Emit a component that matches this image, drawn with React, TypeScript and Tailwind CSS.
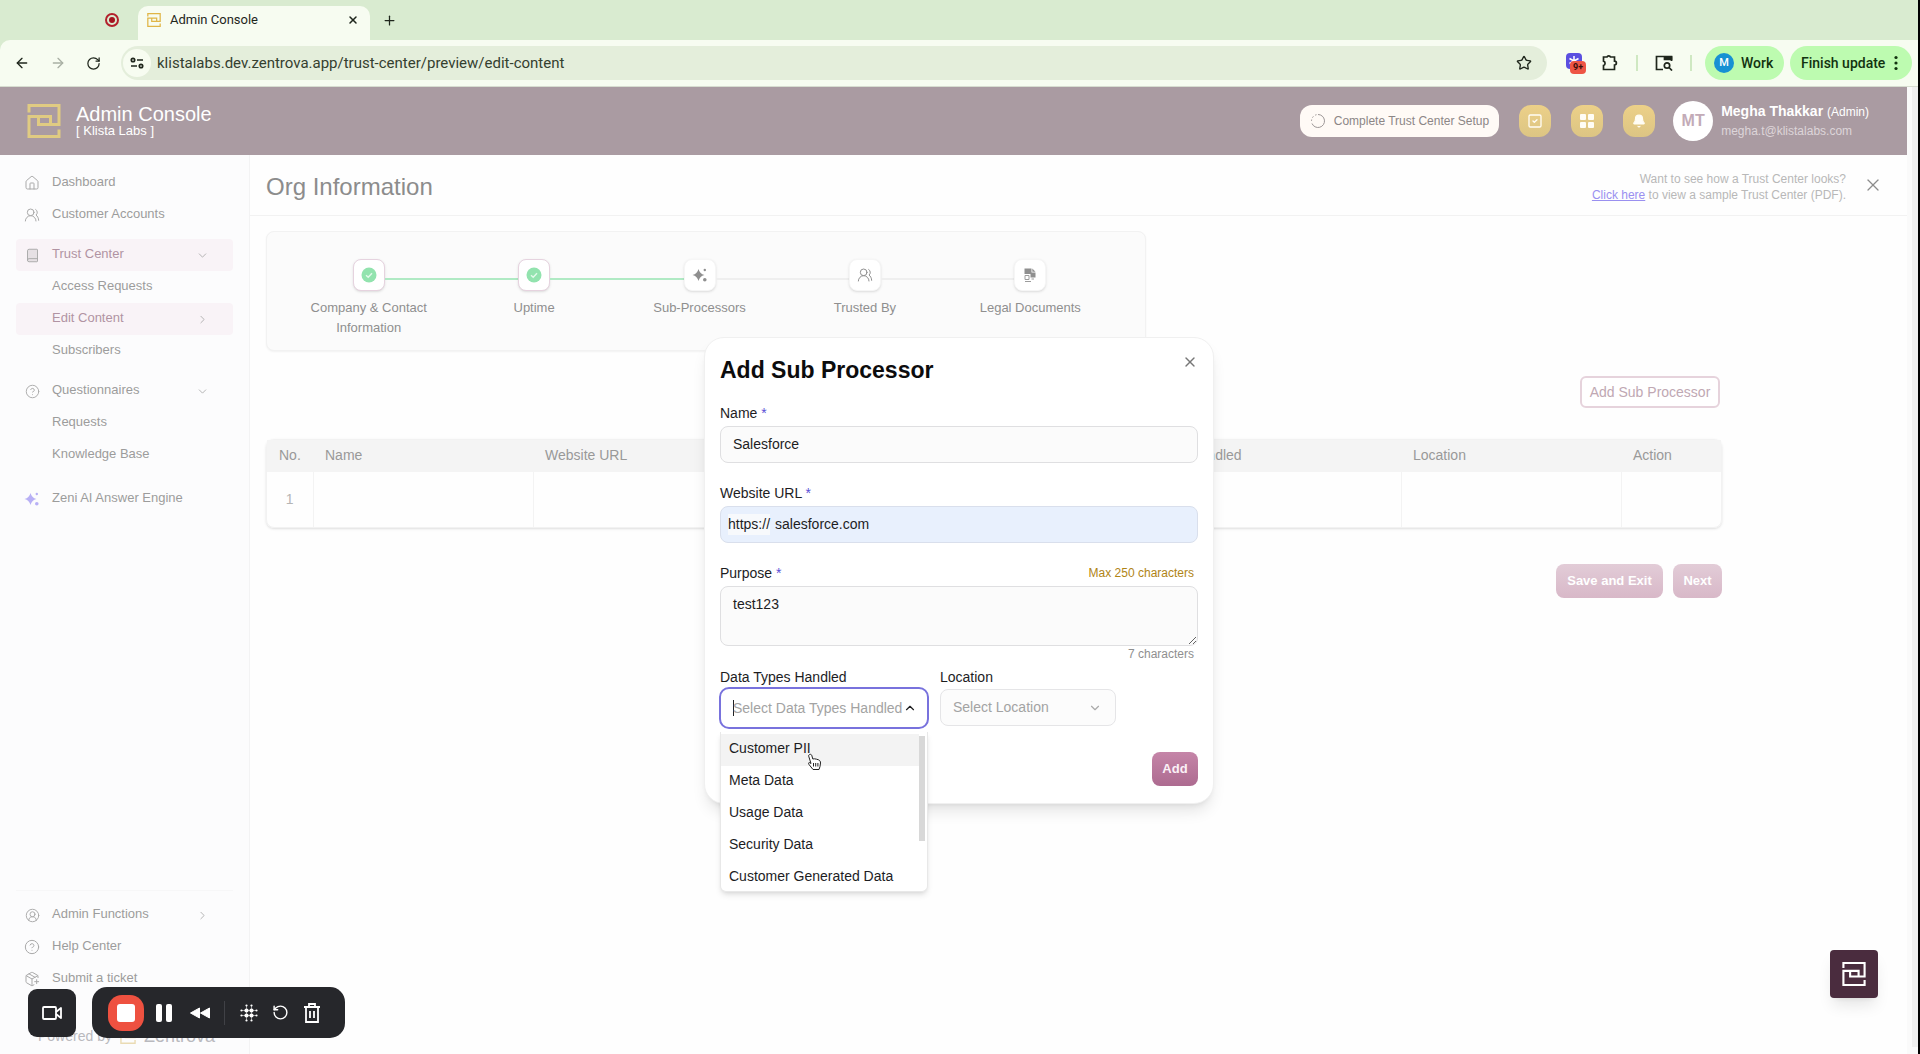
import { useState } from "react";
import type { ReactNode } from "react";
import {
  ArrowLeft,
  ArrowRight,
  Bell,
  Book,
  ChevronDown,
  ChevronRight,
  ChevronUp,
  CircleHelp,
  CircleUserRound,
  House,
  PackagePlus,
  Plus,
  RotateCcw,
  RotateCw,
  SquareCheck,
  Star,
  UsersRound,
  X,
} from "lucide-react";

const DATA_TYPES = [
  "Customer PII",
  "Meta Data",
  "Usage Data",
  "Security Data",
  "Customer Generated Data",
];

function Logo({ className }: { className?: string }) {
  return (
    <svg viewBox="0 0 34 34" fill="none" stroke="currentColor" strokeWidth="3" className={className}>
      <path d="M2 8.500V1.500H32V20.500H11.500V12" />
      <path d="M32 25.500V32.500H2V12.500H23.500V20.500" />
    </svg>
  );
}

function Sparkles({ className }: { className?: string }) {
  return (
    <svg viewBox="0 0 16 16" fill="currentColor" className={className}>
      <path d="M6.500 2C7.500 5.500 9 7 12.500 8C9 9 7.500 10.500 6.500 14C5.500 10.500 4 9 0.500 8C4 7 5.500 5.500 6.500 2Z" />
      <path d="M6.500 4L10.500 8L6.500 12L2.500 8Z" />
      <circle cx="12.800" cy="3" r="1.200" />
      <circle cx="12.800" cy="12.800" r="1.800" />
    </svg>
  );
}

function CheckDot() {
  return (
    <svg viewBox="0 0 16 16" className="size-4">
      <circle cx="8" cy="8" r="7.500" fill="#92e3ae" />
      <path d="M5 8.200L7.200 10.300L11 6.200" fill="none" stroke="#e2f9ea" strokeWidth="1.400" />
    </svg>
  );
}

function LegalIcon() {
  return (
    <svg viewBox="0 0 16 16" className="size-4">
      <path d="M2.500 1.500H9.500V5.500H13.500V10.500H8.500V7H2.500Z" fill="#8f8f8f" />
      <path d="M10.300 1.500L13.500 4.700H10.300Z" fill="#8f8f8f" />
      <path d="M3 8.500H7V12.500H3Z M3 14.500H9M9.500 12H12" fill="none" stroke="#9c9c9c" />
    </svg>
  );
}

function BrowserBar() {
  return (
    <div className="bg-[#d9ebd0] font-[Roboto,sans-serif] text-[#1f261c]">
      <div className="flex h-10 items-end pl-[105px]">
        <span className="mb-[13px] flex size-[14px] items-center justify-center rounded-full border-2 border-[#b3202c]">
          <span className="size-[6px] rounded-full bg-[#a3121f]" />
        </span>
        <div className="ml-[19px] flex h-[34px] w-[232px] items-center rounded-t-[10px] bg-[#f7fcf1] px-[9px] pb-[6px]">
          <Logo className="size-[14px] text-[#e0b546]" />
          <span className="ml-[9px] flex-1 text-[13px]">Admin Console</span>
          <button type="button" aria-label="Close tab" className="mr-[2px]">
            <X size={12} strokeWidth={3} />
          </button>
        </div>
        <button type="button" aria-label="New tab" className="mb-[12px] ml-[12px]">
          <Plus size={15} strokeWidth={2} />
        </button>
      </div>
      <div className="flex h-[47px] items-center rounded-tl-[10px] border-b border-[#d7ddd0] bg-[#f7fcf1] pl-[14px] pr-[6px]">
        <button type="button" aria-label="Back">
          <ArrowLeft size={16} />
        </button>
        <button type="button" aria-label="Forward" className="ml-5 text-[#a9b0a4]">
          <ArrowRight size={16} />
        </button>
        <button type="button" aria-label="Reload" className="ml-5">
          <RotateCw size={15} />
        </button>
        <div className="ml-5 flex h-[34px] flex-1 items-center rounded-full bg-[#e4eedb] pl-[2px] pr-[15px]">
          <span className="flex size-[28px] items-center justify-center rounded-full bg-[#f7fcf1]">
            <svg viewBox="0 0 14 12" className="h-3 w-[14px]" fill="none" stroke="currentColor" strokeWidth="1.700">
              <circle cx="3" cy="3" r="1.700" />
              <path d="M7 3H13M1 9H7" />
              <circle cx="11" cy="9" r="1.700" />
            </svg>
          </span>
          <input
            aria-label="Address"
            readOnly
            value="klistalabs.dev.zentrova.app/trust-center/preview/edit-content"
            className="ml-[6px] flex-1 bg-transparent text-[15px] text-[#34402f] outline-none"
          />
          <Star size={16} />
        </div>
        <span className="relative ml-[17px] h-5 w-6">
          <svg viewBox="0 0 16 16" className="absolute left-[2px] top-0 size-4">
            <rect width="16" height="16" rx="4" fill="#5b4fe0" />
            <path d="M8 3V13M3.500 5.500L12.500 10.500M12.500 5.500L3.500 10.500" stroke="#fff" strokeWidth="1.500" />
          </svg>
          <span className="absolute left-[6px] top-[8px] rounded bg-[#ee5545] px-[3px] text-[9px] leading-[13px] font-bold text-[#3b0f0b]">
            9+
          </span>
        </span>
        <svg viewBox="0 0 18 18" className="ml-[13px] size-[18px]" fill="none" stroke="currentColor" strokeWidth="1.700">
          <path d="M2.500 3H6A1.800 1.500 0 0 1 9.500 3H13.500V7.200A1.800 1.800 0 0 1 13.500 11V15.500H2.500V11.500A2 2.200 0 0 0 2.500 7.200Z" />
        </svg>
        <span className="ml-[17px] h-4 w-[2px] bg-[#cfe8c2]" />
        <svg viewBox="0 0 18 16" className="ml-[17px] h-4 w-[18px]" fill="none" stroke="currentColor" strokeWidth="1.700">
          <path d="M8 14.500H1.500V1.500H16.500V6" />
          <path d="M9.500 2H16.500V4.500H9.500Z" fill="currentColor" />
          <circle cx="12" cy="10.500" r="2.700" />
          <path d="M14 12.500L17 15.500" />
        </svg>
        <span className="ml-[17px] h-4 w-[2px] bg-[#cfe8c2]" />
        <button
          type="button"
          className="ml-[13px] flex h-[34px] w-[79px] items-center gap-[7px] rounded-full bg-[#bdfbb0] pl-[9px] text-[14px] font-medium text-[#12330f]"
        >
          <span className="flex size-5 items-center justify-center rounded-full bg-[#1791d3] text-[11px] text-white">M</span>
          Work
        </button>
        <button
          type="button"
          className="ml-[6px] flex h-[34px] w-[122px] items-center justify-between rounded-full bg-[#bdfbb0] pl-[11px] pr-[14px] text-[14px] font-medium text-[#12330f]"
        >
          Finish update
          <svg viewBox="0 0 4 16" className="h-4 w-1" fill="currentColor">
            <circle cx="2" cy="2.500" r="1.600" />
            <circle cx="2" cy="8" r="1.600" />
            <circle cx="2" cy="13.500" r="1.600" />
          </svg>
        </button>
      </div>
    </div>
  );
}

function HeaderButton({ label, children }: { label: string; children: ReactNode }) {
  return (
    <button
      type="button"
      aria-label={label}
      className="mr-5 flex size-8 items-center justify-center rounded-xl bg-gradient-to-b from-[#ecd088] to-[#dcc584] text-[#fffdf5]"
    >
      {children}
    </button>
  );
}

function Header() {
  return (
    <header className="flex h-[68px] items-center bg-[#aa9ba2] pl-[27px] pr-[38px] text-white">
      <Logo className="size-[34px] text-[#e0cb82]" />
      <div className="ml-[15px] flex-1">
        <h1 className="text-[20px] leading-[20px]">Admin Console</h1>
        <p className="text-[13px] leading-[14px]">[ Klista Labs ]</p>
      </div>
      <button
        type="button"
        className="mr-5 flex h-8 items-center gap-2 rounded-xl bg-[#fffaf6] px-[10px] text-[12px] text-[#8c8686]"
      >
        <svg viewBox="0 0 16 16" className="size-4" fill="none" stroke="#9c9696">
          <path d="M8 1.500A6.500 6.500 0 1 1 2 10.500" />
          <path d="M1.500 8A6.500 6.500 0 0 1 6.500 1.700" strokeDasharray="1.500 2" />
        </svg>
        Complete Trust Center Setup
      </button>
      <HeaderButton label="Tasks">
        <SquareCheck size={16} />
      </HeaderButton>
      <HeaderButton label="Apps">
        <svg viewBox="0 0 16 16" className="size-4" fill="currentColor">
          <rect x="1" y="1" width="6" height="6" rx="1" />
          <rect x="9" y="1" width="6" height="6" rx="1" />
          <rect x="1" y="9" width="6" height="6" rx="1" />
          <rect x="9" y="9" width="6" height="6" rx="1" />
        </svg>
      </HeaderButton>
      <HeaderButton label="Notifications">
        <Bell size={14} fill="currentColor" />
      </HeaderButton>
      <span className="-ml-[2px] flex size-10 items-center justify-center rounded-full bg-white text-[16px] font-bold text-[#c3abb7]">
        MT
      </span>
      <div className="ml-2 leading-[19px]">
        <p className="text-[14px]">
          <b>Megha Thakkar</b> <span className="text-[12px]">(Admin)</span>
        </p>
        <p className="text-[12px] text-[#ddd5d9]">megha.t@klistalabs.com</p>
      </div>
    </header>
  );
}

type NavItemProps = {
  label: string;
  icon?: ReactNode;
  chevron?: "down" | "right";
  active?: boolean;
};

function NavItem({ label, icon, chevron, active }: NavItemProps) {
  return (
    <a
      href="#"
      className={`flex h-8 items-center rounded px-2 ${active ? "bg-[#f9f3f7] text-[#b193a3]" : ""}`}
    >
      <span className="flex w-4 justify-center text-[#a9a9a9]">{icon}</span>
      <span className="ml-3 flex-1 pb-[2px]">{label}</span>
      {chevron === "down" && <ChevronDown size={13} strokeWidth={1.5} className="mr-4 text-[#a5a5a5]" />}
      {chevron === "right" && <ChevronRight size={13} strokeWidth={1.5} className="mr-4 text-[#a5a5a5]" />}
    </a>
  );
}

function Sidebar() {
  return (
    <aside className="flex w-[250px] shrink-0 flex-col border-r border-[#f3f3f4] bg-[#fcfcfd] px-4 pt-3 text-[13px] text-[#9c9c9c]">
      <NavItem label="Dashboard" icon={<House size={16} strokeWidth={1.5} />} />
      <NavItem label="Customer Accounts" icon={<UsersRound size={16} strokeWidth={1.5} />} />
      <div className="mt-2">
        <NavItem
          label="Trust Center"
          icon={<Book size={15} strokeWidth={1.5} fill="#e6e0e4" />}
          chevron="down"
          active
        />
        <NavItem label="Access Requests" />
        <NavItem label="Edit Content" chevron="right" active />
        <NavItem label="Subscribers" />
      </div>
      <div className="mt-2">
        <NavItem label="Questionnaires" icon={<CircleHelp size={15} strokeWidth={1.5} />} chevron="down" />
        <NavItem label="Requests" />
        <NavItem label="Knowledge Base" />
      </div>
      <div className="mt-3">
        <NavItem label="Zeni AI Answer Engine" icon={<Sparkles className="size-4 text-[#b8b0f5]" />} />
      </div>
      <div className="mt-auto border-t border-[#f7f7f8] pt-2">
        <NavItem label="Admin Functions" icon={<CircleUserRound size={15} strokeWidth={1.5} />} chevron="right" />
        <NavItem label="Help Center" icon={<CircleHelp size={16} strokeWidth={1.5} />} />
        <NavItem label="Submit a ticket" icon={<PackagePlus size={16} strokeWidth={1.5} />} />
        <p className="mt-[23px] flex h-9 items-center gap-2 pl-[22px] text-[14px] text-[#b9b9be]">
          Powered by <Logo className="size-4 text-[#eadbb4]" />
          <span className="text-[18px]">Zentrova</span>
        </p>
      </div>
    </aside>
  );
}

const STEPS = [
  { label: "Company & Contact Information", icon: <CheckDot />, done: true },
  { label: "Uptime", icon: <CheckDot />, done: true },
  { label: "Sub-Processors", icon: <Sparkles className="size-4 text-[#8f8f8f]" />, done: false },
  { label: "Trusted By", icon: <UsersRound size={16} strokeWidth={1.5} className="text-[#8f8f8f]" />, done: false },
  { label: "Legal Documents", icon: <LegalIcon />, done: false },
];

function Stepper() {
  return (
    <ol className="grid w-[880px] grid-cols-5 rounded-lg border border-[#f2f2f2] bg-[#fbfbfb] pb-3 pl-[19px] pr-8 pt-[27px] shadow-xs">
      {STEPS.map((step, i) => (
        <li key={step.label} className="flex flex-col items-center">
          <div className="flex w-full items-center">
            <span
              className={`mt-2 h-[2px] flex-1 ${i === 0 ? "bg-transparent" : i < 3 ? "bg-[#b0eac4]" : "bg-[#efefef]"}`}
            />
            <span
              className={`flex size-8 items-center justify-center rounded-lg border bg-white shadow-sm ${step.done ? "border-[#e6d3df]" : "border-[#f6f6f6]"}`}
            >
              {step.icon}
            </span>
            <span
              className={`mt-2 h-[2px] flex-1 ${i === 4 ? "bg-transparent" : i < 2 ? "bg-[#b0eac4]" : "bg-[#efefef]"}`}
            />
          </div>
          <p className="mt-[7px] w-32 text-center text-[13px] leading-5 font-medium text-[#8f8f8f]">{step.label}</p>
        </li>
      ))}
    </ol>
  );
}

function ProcessorTable() {
  return (
    <div className="mt-[31px] rounded-lg border border-[#f2f2f2] shadow-sm">
      <table className="w-full table-fixed text-left text-[14px] text-[#999]">
        <colgroup>
          <col className="w-[46px]" />
          <col className="w-[220px]" />
          <col className="w-[220px]" />
          <col />
          <col className="w-[298px]" />
          <col className="w-[220px]" />
          <col className="w-[100px]" />
        </colgroup>
        <thead>
          <tr className="h-8 bg-[#f4f4f4]">
            {["No.", "Name", "Website URL", "Purpose", "Data Types Handled", "Location", "Action"].map((title) => (
              <th key={title} className="whitespace-nowrap px-3 pb-[2px] font-medium">
                {title}
              </th>
            ))}
          </tr>
        </thead>
        <tbody>
          <tr className="h-[55px] divide-x divide-[#f3f3f3] text-[#b5b5b5]">
            <td className="text-center">1</td>
            <td />
            <td />
            <td />
            <td />
            <td />
            <td />
          </tr>
        </tbody>
      </table>
    </div>
  );
}

function OrgInformation() {
  return (
    <main className="flex-1 bg-[#fefefe]">
      <div className="flex h-[61px] items-center border-b border-[#f2f2f2] pl-4 pr-6">
        <h2 className="flex-1 pt-1 text-[24px] font-medium text-[#8c8c8c]">Org Information</h2>
        <p className="pt-1 text-right text-[12px] leading-4 text-[#b8b8b8]">
          Want to see how a Trust Center looks?
          <br />
          <a href="#" className="text-[#9a90f0] underline">
            Click here
          </a>{" "}
          to view a sample Trust Center (PDF).
        </p>
        <button type="button" aria-label="Close" className="ml-[17px] text-[#8c8c8c]">
          <X size={20} strokeWidth={1.5} />
        </button>
      </div>
      <div className="mr-[185px] pl-4 pt-[15px]">
        <Stepper />
        <div className="mt-[25px] flex justify-end pr-[2px]">
          <button
            type="button"
            className="h-8 w-[140px] rounded-md border-2 border-[#e6d3dc] bg-white text-[14px] text-[#c0a8b3]"
          >
            Add Sub Processor
          </button>
        </div>
        <ProcessorTable />
        <div className="mt-9 flex justify-end gap-[10px]">
          <button
            type="button"
            className="h-[34px] w-[107px] rounded-lg bg-gradient-to-b from-[#e2ccd7] to-[#d8b8c8] text-[13px] font-bold text-white"
          >
            Save and Exit
          </button>
          <button
            type="button"
            className="h-[34px] w-[49px] rounded-lg bg-gradient-to-b from-[#e2ccd7] to-[#d8b8c8] text-[13px] font-bold text-white"
          >
            Next
          </button>
        </div>
      </div>
    </main>
  );
}

function Required() {
  return <span className="text-[#5a4fd6]"> *</span>;
}

function DataTypeMenu() {
  return (
    <div className="absolute left-0 top-[45px] z-10 flex h-[160px] w-[208px] overflow-hidden rounded-b-md border border-t-0 border-[#e8e8e8] bg-white shadow-md">
      <ul role="listbox" className="flex-1 pt-[2px]">
        {DATA_TYPES.map((type, i) => (
          <li
            key={type}
            role="option"
            aria-selected={i === 0}
            className={`flex h-8 items-center px-2 pb-[3px] text-[14px] whitespace-nowrap ${i === 0 ? "bg-[#f3f3f3]" : ""}`}
          >
            {type}
          </li>
        ))}
      </ul>
      <span className="mr-[2px] mt-[4px] h-[105px] w-[6px] bg-[#d8d8d8]" />
      <svg viewBox="0 0 16 18" className="absolute left-[85px] top-[21px] h-[18px] w-4">
        <path
          d="M3.500 1.500C4.500 1 5.500 1.500 5.800 2.500L6.800 6L8.500 5.800L10.500 6.200L12.500 6.800C14 7.500 14.500 8.500 14.500 10L14 13.500L13 16.500H7L3 11.500C2 10 2.800 9.200 4 9.800L5 10.500L2.700 3.200C2.500 2.500 2.800 1.800 3.500 1.500Z"
          fill="#fff"
          stroke="#222"
        />
        <path d="M7.500 10V13.500M9.700 10V13.500M11.900 10V13.500" stroke="#222" fill="none" />
      </svg>
    </div>
  );
}

function AddSubProcessorDialog() {
  const [name, setName] = useState("Salesforce");
  const [url, setUrl] = useState("salesforce.com");
  const [purpose, setPurpose] = useState("test123");

  return (
    <form
      role="dialog"
      aria-label="Add Sub Processor"
      className="w-[510px] rounded-[20px] border border-[#f0f0f0] bg-white px-[15px] pb-[17px] pt-4 text-[14px] text-[#1d1d1f] shadow-lg"
    >
      <div className="flex items-start justify-between">
        <h2 className="text-[23px] leading-8 font-bold text-[#0c0c0d]">Add Sub Processor</h2>
        <button type="button" aria-label="Close dialog" className="text-[#777]">
          <X size={16} strokeWidth={2} />
        </button>
      </div>

      <label htmlFor="name" className="mt-[17px] block leading-5">
        Name
        <Required />
      </label>
      <input
        id="name"
        value={name}
        onChange={(e) => setName(e.target.value)}
        className="mt-[3px] h-[37px] w-full rounded-lg border border-[#dfdfe1] bg-[#fbfbfb] px-3 pb-px outline-none"
      />

      <label htmlFor="url" className="mt-5 block leading-5">
        Website URL
        <Required />
      </label>
      <div className="mt-[3px] flex h-[37px] items-center rounded-lg border border-[#d9dfec] bg-[#e8f0fd] px-[7px]">
        <span className="mr-[5px] bg-[#f7f9fc]">https://</span>
        <input
          id="url"
          value={url}
          onChange={(e) => setUrl(e.target.value)}
          className="flex-1 bg-transparent outline-none"
        />
      </div>

      <div className="mt-5 flex items-center justify-between pr-1">
        <label htmlFor="purpose" className="leading-5">
          Purpose
          <Required />
        </label>
        <span className="text-[12px] text-[#b08415]">Max 250 characters</span>
      </div>
      <textarea
        id="purpose"
        value={purpose}
        onChange={(e) => setPurpose(e.target.value)}
        className="mt-[3px] block h-[60px] w-full rounded-lg border border-[#dfdfe1] bg-[#fbfbfb] px-3 py-[7px] leading-5 outline-none"
      />
      <p className="pr-1 text-right text-[12px] leading-4 text-[#8f8f8f]">{purpose.length} characters</p>

      <div className="mt-[5px] flex gap-[11px]">
        <div className="relative">
          <label htmlFor="types" className="block leading-5">
            Data Types Handled
          </label>
          <div className="-ml-[1px] flex h-[42px] w-[210px] items-center rounded-[10px] border-2 border-[#7872dd] bg-white pl-3 pr-[10px]">
            <span className="-mr-px h-4 w-px bg-[#222]" />
            <input
              id="types"
              role="combobox"
              aria-expanded="true"
              placeholder="Select Data Types Handled"
              className="min-w-0 flex-1 outline-none placeholder:text-[#a3a3a3]"
            />
            <ChevronUp size={14} />
          </div>
          <div className="absolute inset-x-0 top-5">
            <DataTypeMenu />
          </div>
        </div>
        <div>
          <label htmlFor="location" className="block leading-5">
            Location
          </label>
          <div className="relative mt-[2px]">
            <select
              id="location"
              className="h-[37px] w-[176px] appearance-none rounded-lg border border-[#e5e5e7] bg-[#fcfcfc] px-3 text-[#a3a3a3] outline-none"
            >
              <option>Select Location</option>
            </select>
            <ChevronDown size={14} className="pointer-events-none absolute right-[14px] top-[12px] text-[#aaa]" />
          </div>
        </div>
      </div>

      <div className="mt-[23px] flex justify-end">
        <button
          type="button"
          className="h-[34px] w-[46px] rounded-lg bg-gradient-to-b from-[#c585a8] to-[#ad6b90] text-[13px] font-bold text-[#fbf0f6]"
        >
          Add
        </button>
      </div>
    </form>
  );
}

function RecorderBar() {
  return (
    <div className="fixed bottom-4 left-7 z-20 flex items-center gap-4 text-white">
      <button type="button" aria-label="Camera" className="flex size-12 items-center justify-center rounded-[9px] bg-[#26272b]">
        <svg viewBox="0 0 20 14" className="h-[14px] w-5" fill="none" stroke="currentColor" strokeWidth="1.800" strokeLinejoin="round">
          <rect x="1" y="1" width="13" height="12" rx="1" />
          <path d="M14 6L19 2V12L14 8" />
        </svg>
      </button>
      <div className="flex h-[51px] w-[253px] items-center rounded-[15px] bg-[#26272b] pl-4">
        <button type="button" aria-label="Stop" className="flex size-9 items-center justify-center rounded-[14px] bg-[#ee5140]">
          <span className="size-[18px] rounded-[3px] bg-white" />
        </button>
        <button type="button" aria-label="Pause" className="ml-3 flex gap-1">
          <span className="h-[18px] w-[6px] rounded-[2px] bg-white" />
          <span className="h-[18px] w-[6px] rounded-[2px] bg-white" />
        </button>
        <button type="button" aria-label="Rewind" className="ml-[17px]">
          <svg viewBox="0 0 22 14" className="h-[14px] w-[22px]" fill="currentColor" stroke="currentColor" strokeLinejoin="round">
            <path d="M10.500 2V12L1.500 7ZM20.500 2V12L11.500 7Z" />
          </svg>
        </button>
        <span className="ml-[13px] h-6 w-px bg-[#404146]" />
        <button type="button" aria-label="Blur" className="ml-[15px]">
          <svg viewBox="0 0 18 18" className="size-[18px]" fill="currentColor">
            {[1.5, 6.5, 11.5, 16.5].map((x) =>
              [1.5, 6.5, 11.5, 16.5].map((y) => {
                const edgeX = x < 3 || x > 15;
                const edgeY = y < 3 || y > 15;
                if (edgeX && edgeY) return null;
                return <circle key={`${x}-${y}`} cx={x} cy={y} r={edgeX || edgeY ? 1.1 : 2.1} />;
              }),
            )}
            <path d="M6 1H7V17H6ZM11 1H12V17H11ZM1 6H17V7H1ZM1 11H17V12H1Z" opacity="0.5" />
          </svg>
        </button>
        <button type="button" aria-label="Restart" className="ml-[14px]">
          <RotateCcw size={17} />
        </button>
        <button type="button" aria-label="Delete" className="ml-[14px]">
          <svg viewBox="0 0 18 20" className="h-5 w-[18px]" fill="none" stroke="currentColor" strokeWidth="1.800">
            <path d="M1 4H17M3 4V19H15V4M6 4V1H12V4M7 8V15M11 8V15" />
          </svg>
        </button>
      </div>
    </div>
  );
}

export default function App() {
  return (
    <div className="flex min-h-screen flex-col border-r-2 border-black bg-white font-['Liberation_Sans',Arial,sans-serif]">
      <BrowserBar />
      <div className="relative flex flex-1">
        <div className="flex flex-1 flex-col">
          <Header />
          <div className="flex flex-1">
            <Sidebar />
            <OrgInformation />
          </div>
        </div>
        <div className="w-[11px] bg-[#fafafa] pl-[5px]">
          <div className="h-[960px] w-[6px] bg-[#efefef]" />
        </div>
        <div className="absolute inset-0 flex items-center justify-center">
          <AddSubProcessorDialog />
        </div>
      </div>
      <button
        type="button"
        aria-label="Open Zentrova"
        className="fixed bottom-14 right-[42px] flex size-12 items-center justify-center rounded bg-[#4a2c3e] text-white shadow-lg"
      >
        <Logo className="size-6" />
      </button>
      <RecorderBar />
    </div>
  );
}
